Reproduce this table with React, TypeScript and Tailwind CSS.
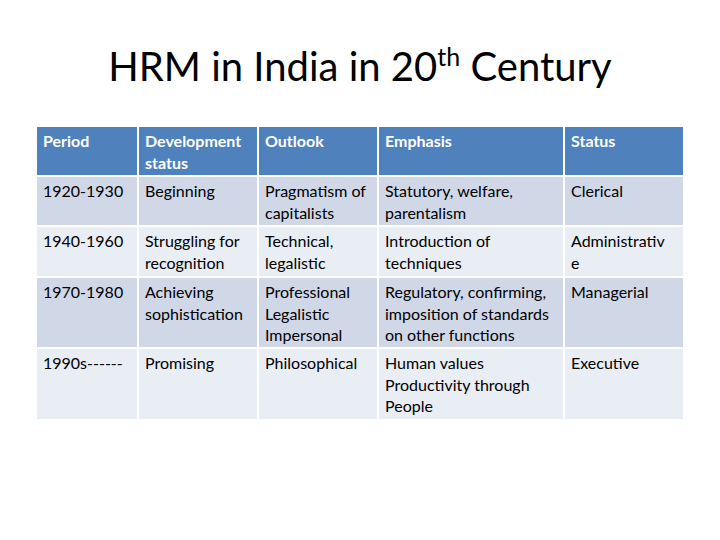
const header = ["Period", "Development status", "Outlook", "Emphasis", "Status"];

const rows: { cells: React.ReactNode[]; h: string }[] = [
  {
    h: "h-[48px]",
    cells: ["1920-1930", "Beginning", <>Pragmatism of<br />capitalists</>, <>Statutory, welfare,<br />parentalism</>, "Clerical"],
  },
  {
    h: "h-[49px]",
    cells: ["1940-1960", <>Struggling for<br />recognition</>, <>Technical,<br />legalistic</>, <>Introduction of<br />techniques</>, <>Administrativ<br />e</>],
  },
  {
    h: "h-[69px]",
    cells: [
      "1970-1980",
      <>Achieving<br />sophistication</>,
      <>Professional<br />Legalistic<br />Impersonal</>,
      <>Regulatory, confirming,<br />imposition of standards<br />on other functions</>,
      "Managerial",
    ],
  },
  {
    h: "h-[70px]",
    cells: ["1990s------", "Promising", "Philosophical", <>Human values<br />Productivity through<br />People</>, "Executive"],
  },
];

export default function App() {
  return (
    <div
      className="w-[720px] h-[540px] bg-white text-black overflow-hidden"
      style={{ fontFamily: "Lato, 'Open Sans', sans-serif" }}
    >
      <h1 className="pt-[42px] h-[127px] text-center text-[40px] leading-[48px] font-normal">
        HRM in India in 20<sup className="text-[25px] align-baseline relative -top-[15px] leading-none">th</sup> Century
      </h1>

      <div className="ml-[37px] grid grid-cols-[100px_118px_118px_184px_118px] gap-[2px] text-[16px] leading-[21.5px]">
        {header.map((t) => (
          <div key={t} className="h-[48px] bg-[#4f81bd] text-white font-bold px-[6px] pt-[3px]">
            {t}
          </div>
        ))}
        {rows.map((r, i) =>
          r.cells.map((c, j) => (
            <div
              key={`${i}-${j}`}
              className={`${r.h} px-[6px] pt-[3px] ${i % 2 === 0 ? "bg-[#d0d8e8]" : "bg-[#e9edf4]"}`}
            >
              {c}
            </div>
          ))
        )}
      </div>
    </div>
  );
}
